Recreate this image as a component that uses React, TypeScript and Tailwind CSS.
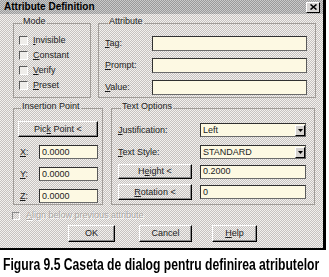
import { ReactNode } from "react";

const dither =
   "bg-[image:repeating-conic-gradient(#c6c2c0_0%_25%,#f3f1ee_0%_50%)] bg-[length:2px_2px]";
const label = "text-[9px] leading-none text-[#1c1c1c]";
const field = "border border-t-[#303030] border-l-[#303030] border-r-[#5a5a5a] border-b-[#6a6a6a] bg-[#fdf9e3]";
const btn =
   "flex items-center justify-center border border-t-white border-l-white border-r-black border-b-black shadow-[inset_-1px_-1px_0_#8a8a8a]";

function Group( { title, className, children } : { title: string, className: string, children: ReactNode } ) {
   return (
      <fieldset className={"border border-[#a09c98] " + className}>
         <legend className={"ml-[3px] px-[1px] h-[12px] " + label}>{title}</legend>
         {children}
      </fieldset>
   );
}

function Check( { u, rest } : { u: string, rest: string } ) {
   return (
      <div className="flex items-center h-[15px]">
         <span className="w-[9px] h-[9px] border border-t-[#5a5a5a] border-l-[#5a5a5a] border-r-white border-b-white bg-[#efedea]" />
         <span className={"ml-[5px] " + label}><u>{u}</u>{rest}</span>
      </div>
   );
}

function Arrow() {
   return (
      <span className="ml-auto w-[10px] h-[11px] flex items-center justify-center border border-t-white border-l-white border-r-black border-b-black bg-[#d6d3d0]">
         <svg width="5" height="3" viewBox="0 0 5 3"><path d="M0 0h5L2.5 3z" fill="#000" /></svg>
      </span>
   );
}

export default function App() {
   return (
      <div className="w-[329px] h-[277px] bg-white font-['Liberation_Sans',Arial,sans-serif] overflow-hidden">
         <div className={"w-[326px] h-[250px] border-r-[3px] border-b-[2px] border-black " + dither}>
            <div className="h-[14px] flex items-center pl-[4px] pr-[3px] bg-[image:repeating-conic-gradient(#9a9a9a_0%_25%,#cbcbcb_0%_50%)] bg-[length:2px_2px]">
               <span className="text-[10px] font-bold leading-none text-black">Attribute Definition</span>
               <span className="ml-auto w-[14px] h-[11px] flex items-center justify-center border border-t-white border-l-white border-r-black border-b-black bg-[#d8d6d4]">
                  <svg width="7" height="6" viewBox="0 0 7 6"><path d="M0.5 0.5L6.5 5.5M6.5 0.5L0.5 5.5" stroke="#000" strokeWidth="1.6" /></svg>
               </span>
            </div>

            <div className="pl-[13px]">
               <div className="flex mt-[3px]">
                  <Group title="Mode" className="w-[78px] h-[81px] pl-[5px] pt-[4px]">
                     <Check u="I" rest="nvisible" />
                     <Check u="C" rest="onstant" />
                     <Check u="V" rest="erify" />
                     <Check u="P" rest="reset" />
                  </Group>
                  <Group title="Attribute" className="ml-[7px] w-[218px] h-[81px] pl-[6px] pt-[7px]">
                     <div className="flex flex-col gap-[7px]">
                        <div className="flex items-center">
                           <span className={"w-[47px] " + label}><u>T</u>ag:</span>
                           <div className={"w-[155px] h-[15px] " + field} />
                        </div>
                        <div className="flex items-center">
                           <span className={"w-[47px] " + label}><u>P</u>rompt:</span>
                           <div className={"w-[155px] h-[15px] " + field} />
                        </div>
                        <div className="flex items-center">
                           <span className={"w-[47px] " + label}><u>V</u>alue:</span>
                           <div className={"w-[155px] h-[15px] " + field} />
                        </div>
                     </div>
                  </Group>
               </div>

               <div className="flex mt-[4px]">
                  <Group title="Insertion Point" className="w-[90px] h-[103px] pl-[4px] pt-[7px]">
                     <div className={"w-[80px] h-[16px] " + btn}>
                        <span className={label}>Pic<u>k</u> Point &lt;</span>
                     </div>
                     <div className="mt-[8px] flex flex-col gap-[8px]">
                        {["X", "Y", "Z"].map( ( c ) => (
                           <div key={c} className="flex items-center">
                              <span className={"w-[21px] pl-[2px] " + label}><u>{c}</u>:</span>
                              <div className={"w-[59px] h-[14px] flex items-center pl-[2px] " + field}>
                                 <span className={label}>0.0000</span>
                              </div>
                           </div>
                        ))}
                     </div>
                  </Group>

                  <Group title="Text Options" className="ml-[8px] w-[204px] h-[103px] pl-[6px] pt-[9px]">
                     <div className="flex items-center">
                        <span className={"w-[82px] " + label}><u>J</u>ustification:</span>
                        <div className={"w-[106px] h-[14px] flex items-center pl-[2px] " + field}>
                           <span className={label}>Left</span>
                           <Arrow />
                        </div>
                     </div>
                     <div className="flex items-center mt-[8px]">
                        <span className={"w-[82px] " + label}><u>T</u>ext Style:</span>
                        <div className={"w-[106px] h-[14px] flex items-center pl-[2px] " + field}>
                           <span className={label}>STANDARD</span>
                           <Arrow />
                        </div>
                     </div>
                     <div className="flex items-center mt-[5px]">
                        <div className={"w-[74px] h-[15px] " + btn}>
                           <span className={label}>H<u>e</u>ight &lt;</span>
                        </div>
                        <div className={"ml-[8px] w-[106px] h-[14px] flex items-center pl-[2px] " + field}>
                           <span className={label}>0.2000</span>
                        </div>
                     </div>
                     <div className="flex items-center mt-[5px]">
                        <div className={"w-[74px] h-[16px] " + btn}>
                           <span className={label}><u>R</u>otation &lt;</span>
                        </div>
                        <div className={"ml-[8px] w-[106px] h-[14px] flex items-center pl-[2px] " + field}>
                           <span className={label}>0</span>
                        </div>
                     </div>
                  </Group>
               </div>

               <div className="flex items-center h-[9px] mt-[6px] -ml-[1px]">
                  <span className="w-[8px] h-[8px] border border-t-[#8a8a8a] border-l-[#8a8a8a] border-r-white border-b-white" />
                  <span className="ml-[6px] text-[9px] leading-none text-[#aaa6a2] [text-shadow:1px_1px_0_#ffffff]">
                     <u>A</u>lign below previous attribute
                  </span>
               </div>

               <div className="flex mt-[5px] ml-[55px]">
                  <div className={"w-[47px] h-[17px] " + btn}>
                     <span className={label}>OK</span>
                  </div>
                  <div className={"ml-[24px] w-[53px] h-[17px] " + btn}>
                     <span className={label}>Cancel</span>
                  </div>
                  <div className={"ml-[20px] w-[45px] h-[17px] " + btn}>
                     <span className={label}><u>H</u>elp</span>
                  </div>
               </div>
            </div>
         </div>

         <div className="mt-[3px] pl-[3px] whitespace-nowrap">
            <span className="inline-block origin-left scale-x-[0.76] font-['Liberation_Sans_Narrow','Liberation_Sans',sans-serif] font-bold text-[16px] leading-[18px] text-black">
               Figura 9.5 Caseta de dialog pentru definirea atributelor
            </span>
         </div>
      </div>
   );
}
